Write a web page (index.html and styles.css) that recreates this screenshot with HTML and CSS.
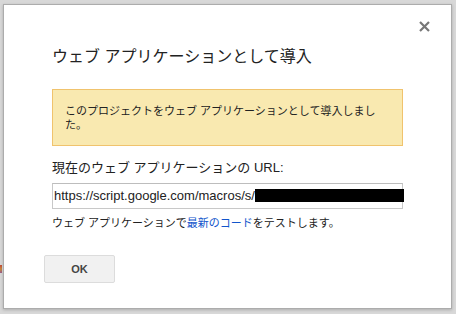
FILE: index.html
```html
<!DOCTYPE html>
<html>
  <head>
    <title>ウェブ アプリケーションとして導入</title>
    <meta charset="utf-8">
    <link rel="stylesheet" href="styles.css">
  </head>
  <body>
    <div class="page-peek"></div>

    <div class="dialog">
      <span class="close" title="閉じる">
        <svg width="11" height="11" viewBox="0 0 11 11">
          <path d="M1 1 L10 10 M10 1 L1 10" stroke="#777" stroke-width="2.2" fill="none"/>
        </svg>
      </span>

      <div class="content">
        <h1 class="title">ウェブ アプリケーションとして導入</h1>

        <div class="notice">このプロジェクトをウェブ アプリケーションとして導入しました。</div>

        <div class="label">現在のウェブ アプリケーションの URL:</div>
        <div class="url-field">https://script.google.com/macros/s/<span class="redacted"></span></div>

        <div class="hint">ウェブ アプリケーションで<a href="#" class="link">最新のコード</a>をテストします。</div>
      </div>

      <div class="buttons">
        <button class="btn">OK</button>
      </div>
    </div>
  </body>
</html>
```

FILE: styles.css
```css
*{
  box-sizing: border-box;
  margin: 0;
  padding: 0;
}

body {
  background-color: #d8d8d8;
  padding: 4px 4px 5px 3px;
  font-family: "Liberation Sans", "Noto Sans CJK JP", sans-serif;
  color: #222;
}

.page-peek { /* bit of the page behind the overlay */
  position: absolute;
  left: 0;
  top: 265px;
  width: 2px;
  height: 8px;
  background: linear-gradient(#c24a3a, #c98a3e, #9a5a8a);
}

.dialog {
  position: relative;
  width: 449px;
  height: 305px;
  background-color: #fff;
  border: 1px solid #acacac;
  box-shadow: 0 1px 3px rgba(0,0,0,0.2);
}

.close {
  position: absolute;
  top: 16px;
  right: 21px;
  width: 11px;
  height: 11px;
  display: flex;
  cursor: pointer;
}

.content {
  padding: 42px 48px 0 48px;
}

.title {
  font-size: 16px;
  line-height: 20px;
  font-weight: normal;
  color: #222;
}

.notice {
  margin-top: 22px;
  background-color: #f9e9b0;
  border: 1px solid #f0c36d;
  padding: 14px 12px 13px 12px;
  font-size: 11px;
  line-height: 14px;
  color: #222;
}

.label {
  margin-top: 14px;
  font-size: 13px;
  line-height: 16px;
}

.url-field {
  margin-top: 7px;
  width: 351px;
  height: 26px;
  border: 1px solid #c8c8c8;
  border-top-color: #bdbdbd;
  padding: 0 0 0 1px;
  font-size: 13px;
  line-height: 24px;
  white-space: nowrap;
  color: #222;
}

.redacted {
  display: inline-block;
  vertical-align: middle;
  width: 149px;
  height: 13px;
  margin-top: -2px;
  background-color: #000;
}

.hint {
  margin-top: 7px;
  font-size: 11px;
  line-height: 14px;
}

.link {
  color: #1155cc;
  text-decoration: none;
}

.buttons {
  padding: 25px 0 0 40px;
}

.btn {
  width: 71px;
  height: 28px;
  background-color: #f1f1f1;
  border: 1px solid #dcdcdc;
  border-radius: 2px;
  font-family: "Liberation Sans", Arial, sans-serif;
  font-size: 11px;
  font-weight: bold;
  color: #444;
  cursor: pointer;
}
```
